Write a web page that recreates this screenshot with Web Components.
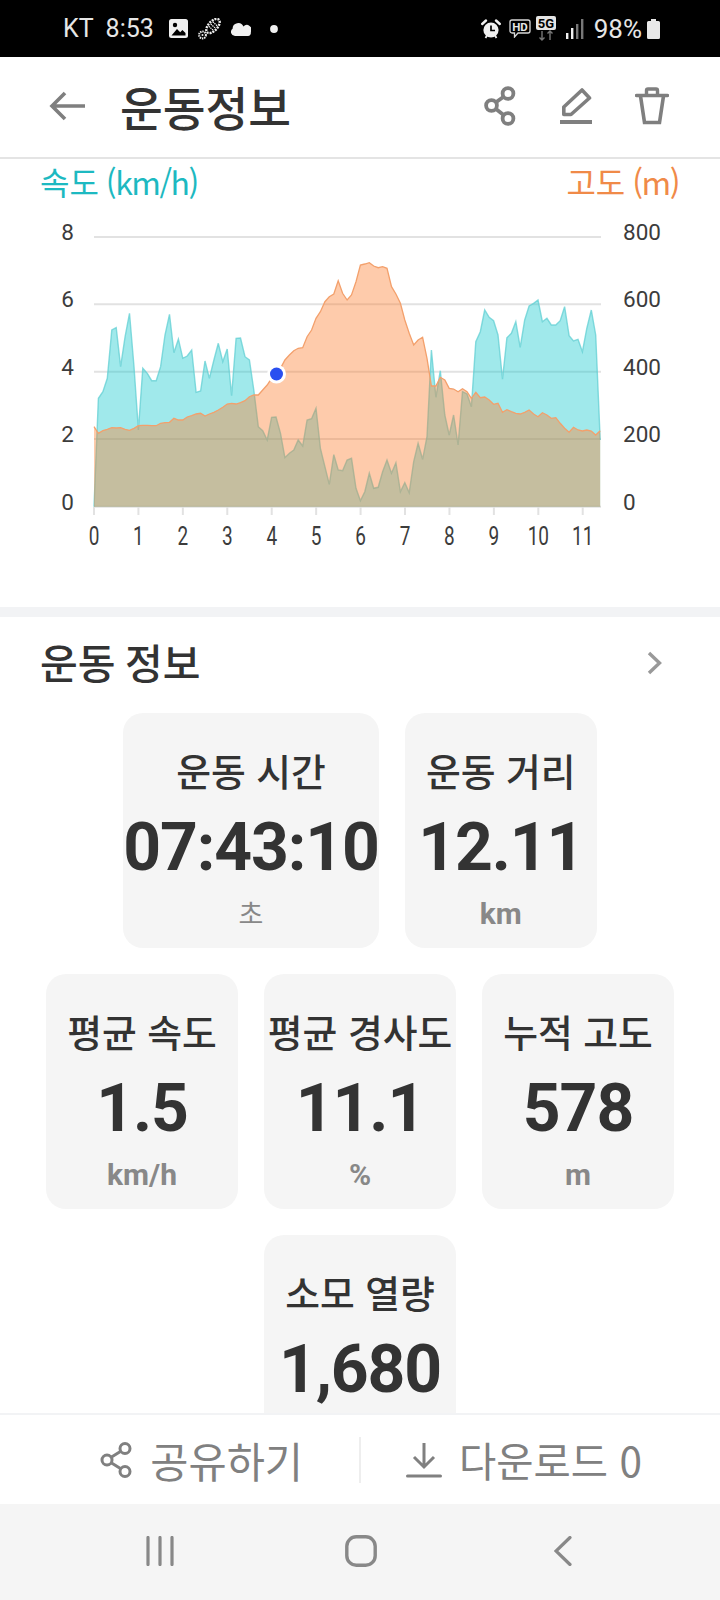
<!DOCTYPE html>
<html lang="ko">
<head>
<meta charset="utf-8">
<title>운동정보</title>
<style>
    html, body {
        margin: 0;
        padding: 0;
        background: #fff;
        font-family: "Noto Sans CJK KR", "Noto Sans", sans-serif;
    }
</style>
</head>
<body>
<workout-screen>
    <status-bar></status-bar>
    <app-header>운동정보</app-header>
    <speed-chart></speed-chart>
    <section-head>운동 정보</section-head>
    <stat-grid>
        <stat-card><span slot="label">운동 시간</span><span slot="value">07:43:10</span><span slot="unit" style="font-weight:400;font-size:27px">초</span></stat-card>
        <stat-card><span slot="label">운동 거리</span><span slot="value">12.11</span><span slot="unit">km</span></stat-card>
        <stat-card><span slot="label">평균 속도</span><span slot="value">1.5</span><span slot="unit">km/h</span></stat-card>
        <stat-card><span slot="label">평균 경사도</span><span slot="value">11.1</span><span slot="unit">%</span></stat-card>
        <stat-card><span slot="label">누적 고도</span><span slot="value">578</span><span slot="unit">m</span></stat-card>
        <stat-card><span slot="label">소모 열량</span><span slot="value">1,680</span></stat-card>
    </stat-grid>
    <action-bar slot="footer"></action-bar>
    <nav-bar slot="footer"></nav-bar>
</workout-screen>

<script>
class WorkoutScreen extends HTMLElement {
    constructor() {
        super();
        this.attachShadow({mode: 'open'});
        this.shadowRoot.innerHTML = `
            <style>
                :host {
                    display: flex;
                    flex-direction: column;
                    width: 720px;
                    height: 1600px;
                    overflow: hidden;
                    background: #fff;
                }
                .body {
                    flex: 1;
                    min-height: 0;
                    overflow: hidden;
                }
            </style>
            <div class="body"><slot></slot></div>
            <slot name="footer"></slot>
        `;
    }
}

class StatusBar extends HTMLElement {
    constructor() {
        super();
        this.attachShadow({mode: 'open'});
        this.shadowRoot.innerHTML = `
            <style>
                :host {
                    display: flex;
                    align-items: center;
                    justify-content: space-between;
                    height: 57px;
                    padding: 0 60px 0 63px;
                    box-sizing: border-box;
                    background: #000;
                    color: #e6e6e6;
                    font: 400 25px Roboto, sans-serif;
                }
                .side {
                    display: flex;
                    align-items: center;
                }
                svg {
                    display: block;
                    flex: none;
                }
                .time { margin-left: 12px; }
                .pct { font-size: 26px; }
            </style>
            <div class="side left">
                <span>KT</span>
                <span class="time">8:53</span>
                <svg style="margin-left:15px" width="19" height="19" viewBox="0 0 19 19">
                    <rect width="19" height="19" rx="2.5" fill="#f0f0f0"/>
                    <circle cx="6" cy="6" r="2.2" fill="#000"/>
                    <path d="M2.5 16.5 L8 10 L11.2 13.2 L13.4 11 L16.5 14 V16.5 Z" fill="#000"/>
                </svg>
                <svg style="margin-left:10px" width="23" height="22" viewBox="0 0 23 22">
                    <g transform="rotate(42 15 8)">
                        <ellipse cx="15" cy="8" rx="4.6" ry="8.6" fill="none" stroke="#eee" stroke-width="2.4" stroke-dasharray="2 1"/>
                        <path d="M12 5 H18 M12 8 H18 M12 11 H18" stroke="#eee" stroke-width="1.3" stroke-dasharray="1.4 .8"/>
                    </g>
                    <circle cx="4.5" cy="17" r="3.4" fill="none" stroke="#eee" stroke-width="2" stroke-dasharray="1.4 .8"/>
                    <circle cx="4.5" cy="17" r="1" fill="#eee"/>
                </svg>
                <svg style="margin-left:10px" width="20" height="14" viewBox="0 0 20 14">
                    <path d="M4 14 A4 4 0 0 1 1.6 6.8 A5.6 5.6 0 0 1 12.4 4.6 A4.6 4.6 0 0 1 19.8 10 A3.2 3.2 0 0 1 17 14 Z" fill="#f0f0f0"/>
                </svg>
                <svg style="margin-left:19px" width="8" height="8" viewBox="0 0 8 8"><circle cx="4" cy="4" r="3.9" fill="#f0f0f0"/></svg>
            </div>
            <div class="side right">
                <svg width="20" height="20" viewBox="0 0 20 20">
                    <circle cx="10" cy="11" r="7.6" fill="#f0f0f0"/>
                    <path d="M10 6.5 V11.5 H14" fill="none" stroke="#000" stroke-width="1.7"/>
                    <path d="M1.2 5 L5 1.5 M18.8 5 L15 1.5" stroke="#f0f0f0" stroke-width="2.4" stroke-linecap="round"/>
                    <path d="M4.5 19 L6 16.5 M15.5 19 L14 16.5" stroke="#f0f0f0" stroke-width="1.8"/>
                </svg>
                <svg style="margin-left:8px" width="22" height="19" viewBox="0 0 22 19">
                    <path d="M3 1 H19 A2 2 0 0 1 21 3 V12 A2 2 0 0 1 19 14 H9 L5.5 18 V14 H3 A2 2 0 0 1 1 12 V3 A2 2 0 0 1 3 1 Z" fill="none" stroke="#d8d8d8" stroke-width="1.3"/>
                    <text x="11" y="11.6" text-anchor="middle" font-family="Roboto, sans-serif" font-size="11.5" font-weight="700" fill="#e6e6e6">HD</text>
                </svg>
                <svg style="margin-left:5px" width="20" height="25" viewBox="0 0 20 25">
                    <rect width="20" height="14" rx="2" fill="#e4e4e4"/>
                    <text x="10" y="11.8" text-anchor="middle" font-family="Roboto, sans-serif" font-size="13" font-weight="700" fill="#000">5G</text>
                    <path d="M6 15 V24 M3.5 21.5 L6 24 L8.5 21.5" fill="none" stroke="#777" stroke-width="1.4"/>
                    <path d="M14 24 V15 M11.5 17.5 L14 15 L16.5 17.5" fill="none" stroke="#777" stroke-width="1.4"/>
                </svg>
                <svg style="margin:0 10px" width="18" height="20" viewBox="0 0 18 20">
                    <rect x="0" y="14" width="2.4" height="6" fill="#f0f0f0"/>
                    <rect x="5" y="9" width="2.4" height="11" fill="#f0f0f0"/>
                    <rect x="10" y="5" width="2.4" height="15" fill="#777"/>
                    <rect x="15" y="0" width="2.4" height="20" fill="#777"/>
                </svg>
                <span class="pct">98%</span>
                <svg style="margin-left:5px" width="13" height="20" viewBox="0 0 13 20">
                    <path d="M4 0 H9 V2 H11.5 A1.5 1.5 0 0 1 13 3.5 V18.5 A1.5 1.5 0 0 1 11.5 20 H1.5 A1.5 1.5 0 0 1 0 18.5 V3.5 A1.5 1.5 0 0 1 1.5 2 H4 Z" fill="#e8e8e8"/>
                </svg>
            </div>
        `;
    }
}

class AppHeader extends HTMLElement {
    constructor() {
        super();
        this.attachShadow({mode: 'open'});
        this.shadowRoot.innerHTML = `
            <style>
                :host {
                    display: flex;
                    align-items: center;
                    height: 102px;
                    padding: 0 51px 2px 49px;
                    box-sizing: border-box;
                    border-bottom: 2px solid #e4e4e4;
                    background: #fff;
                }
                .title {
                    margin-left: 34px;
                    flex: 1;
                    font-size: 46.5px;
                    font-weight: 500;
                    line-height: 60px;
                    color: #333;
                }
                .icons {
                    display: flex;
                    align-items: center;
                    gap: 44px;
                }
                .trash { margin-left: -1px; }
                svg { display: block; }
            </style>
            <svg width="37" height="30" viewBox="0 0 37 30">
                <path d="M36 15 H3 M16 2 L3 15 L16 28" fill="none" stroke="#7f7f7f" stroke-width="3.6"/>
            </svg>
            <div class="title"><slot></slot></div>
            <div class="icons">
                <svg width="32" height="40" viewBox="0 0 32 40">
                    <g fill="none" stroke="#7f7f7f" stroke-width="3.8">
                        <circle cx="24" cy="7.5" r="5.4"/>
                        <circle cx="7.5" cy="19.5" r="5.4"/>
                        <circle cx="24" cy="32.5" r="5.4"/>
                        <path d="M19.6 10.7 L12 16.3 M12 23 L19.6 29"/>
                    </g>
                </svg>
                <svg width="32" height="38" viewBox="0 0 32 38">
                    <path d="M3.8 27.5 V20 L22 3 L29.5 11 L11 27.5 Z" fill="none" stroke="#7f7f7f" stroke-width="3.6" stroke-linejoin="round"/>
                    <rect x="0" y="33" width="32" height="4" fill="#7f7f7f"/>
                </svg>
                <svg class="trash" width="34" height="38" viewBox="0 0 34 38">
                    <path d="M11.5 7 V3.5 Q11.5 2 13 2 H21 Q22.5 2 22.5 3.5 V7" fill="none" stroke="#7f7f7f" stroke-width="3.4"/>
                    <path d="M1.5 8.5 H32.5" stroke="#7f7f7f" stroke-width="3.4" stroke-linecap="round"/>
                    <path d="M5.5 9 L9.5 35.5 H24.5 L28.5 9" fill="none" stroke="#7f7f7f" stroke-width="3.6"/>
                </svg>
            </div>
        `;
    }
}

class SpeedChart extends HTMLElement {
    // y positions read off the reference, one sample every 0.1 km
    speed = [1040,715,695,655,510,503,620,530,460,620,810,625,640,662,662,620,525,463,578,537,595,588,570,697,693,603,655,600,550,605,567,707,535,534,590,600,690,800,812,840,772,771,820,893,880,870,840,858,780,776,745,865,920,973,884,930,932,900,895,985,1022,995,940,985,982,935,900,940,908,995,968,998,905,850,898,830,570,712,632,765,825,765,855,695,702,740,545,515,450,472,482,525,658,533,520,485,562,480,438,430,420,485,475,495,495,482,440,527,543,538,575,505,450,525,840];
    altitude = [800,820,812,808,803,804,803,808,811,805,797,796,796,797,797,790,788,787,775,780,780,771,767,762,760,768,762,757,750,742,732,730,732,728,722,710,705,705,690,675,655,645,625,600,585,572,565,563,530,510,475,455,425,410,402,362,400,420,405,365,315,312,308,318,323,320,325,380,402,430,480,520,555,540,532,595,678,678,652,660,685,687,695,686,695,715,697,713,711,720,733,730,757,749,755,760,762,757,750,762,770,758,765,775,773,790,805,817,802,810,813,810,813,825,812];

    constructor() {
        super();
        this.attachShadow({mode: 'open'});
    }

    connectedCallback() {
        this.render();
    }

    areaPath(values) {
        const line = values.map((v, i) => `${(94 + i * 4.44).toFixed(1)},${(160 + v / 3).toFixed(1)}`);
        return {
            line: line.join(' '),
            area: `94,506.7 ${line.join(' ')} 600.2,506.7`
        };
    }

    render() {
        const speed = this.areaPath(this.speed);
        const altitude = this.areaPath(this.altitude);
        const rows = [[237, '8', '800'], [304.3, '6', '600'], [371.7, '4', '400'], [439, '2', '200'], [506.7, '0', '0']];
        const grid = rows.map(([y, left, right]) => `
            <line x1="94" x2="601" y1="${y}" y2="${y}" stroke="#e2e2e2" stroke-width="2"/>
            <text x="74" y="${y + 3}" text-anchor="end" class="axis">${left}</text>
            <text x="623" y="${y + 3}" class="axis">${right}</text>
        `).join('');
        let ticks = '';
        for (let km = 0; km <= 11; km++) {
            const x = 94 + km * 44.43;
            ticks += `
                <line x1="${x}" x2="${x}" y1="507" y2="515" stroke="#e2e2e2" stroke-width="2"/>
                <text transform="translate(${x} 545) scale(.76 1)" text-anchor="middle" class="km">${km}</text>
            `;
        }
        this.shadowRoot.innerHTML = `
            <style>
                :host {
                    display: block;
                    height: 448px;
                    background: #fff;
                }
                .heads {
                    display: flex;
                    justify-content: space-between;
                    height: 44px;
                    padding: 0 41px 0 40px;
                    font-size: 32px;
                    line-height: 44px;
                    word-spacing: -2px;
                }
                .speed { color: #1db9c1; }
                .alt { color: #f08a48; }
                .heads b {
                    font-weight: 400;
                    letter-spacing: -1.5px;
                }
                svg { display: block; }
                text {
                    font-family: Roboto, sans-serif;
                    fill: #3c3c3c;
                }
                .axis { font-size: 22.5px; }
                .km { font-size: 25px; }
            </style>
            <div class="heads">
                <span class="speed">속도 <b>(km/h)</b></span>
                <span class="alt">고도 <b>(m)</b></span>
            </div>
            <svg width="720" height="404" viewBox="0 203 720 404">
                ${grid}
                ${ticks}
                <polygon points="${speed.area}" fill="rgb(18,200,204)" fill-opacity=".4"/>
                <polyline points="${speed.line}" fill="none" stroke="#62cfd3" stroke-width="1.4" stroke-opacity=".75"/>
                <polygon points="${altitude.area}" fill="rgb(252,125,45)" fill-opacity=".4"/>
                <polyline points="${altitude.line}" fill="none" stroke="#f3a06c" stroke-width="1.3"/>
                <circle cx="276.5" cy="374" r="9.5" fill="#fff"/>
                <circle cx="276.5" cy="374" r="6.5" fill="#2a4ff0"/>
            </svg>
        `;
    }
}

class SectionHead extends HTMLElement {
    constructor() {
        super();
        this.attachShadow({mode: 'open'});
        this.shadowRoot.innerHTML = `
            <style>
                :host {
                    display: flex;
                    align-items: center;
                    justify-content: space-between;
                    height: 92px;
                    margin-top: 10px;
                    padding: 0 58px 0 40px;
                    box-shadow: 0 -10px 0 #f2f3f5;
                    font-size: 41px;
                    font-weight: 500;
                    word-spacing: -2px;
                    color: #333;
                }
                span {
                    position: relative;
                    top: -2px;
                }
                svg { display: block; }
            </style>
            <span><slot></slot></span>
            <svg width="15" height="24" viewBox="0 0 15 24">
                <path d="M2 2 L12.5 12 L2 22" fill="none" stroke="#999" stroke-width="3.4"/>
            </svg>
        `;
    }
}

class StatGrid extends HTMLElement {
    constructor() {
        super();
        this.attachShadow({mode: 'open'});
        this.shadowRoot.innerHTML = `
            <style>
                :host {
                    display: flex;
                    flex-wrap: wrap;
                    justify-content: center;
                    gap: 26px;
                    padding: 4px 20px 0;
                }
            </style>
            <slot></slot>
        `;
    }
}

class StatCard extends HTMLElement {
    constructor() {
        super();
        this.attachShadow({mode: 'open'});
        this.shadowRoot.innerHTML = `
            <style>
                :host {
                    display: flex;
                    flex-direction: column;
                    align-items: center;
                    box-sizing: border-box;
                    min-width: 192px;
                    height: 235px;
                    padding-top: 34px;
                    border-radius: 20px;
                    background: #f5f5f5;
                    white-space: nowrap;
                }
                .label {
                    font-size: 37.8px;
                    font-weight: 500;
                    line-height: 46px;
                    color: #333;
                }
                .value {
                    margin-top: 20px;
                    font: 700 66px/70px Roboto, sans-serif;
                    letter-spacing: -1.1px;
                    color: #333;
                }
                .unit {
                    margin-top: 11px;
                    font: 700 30px/40px Roboto, "Noto Sans CJK KR", sans-serif;
                    color: #888;
                }
            </style>
            <div class="label"><slot name="label"></slot></div>
            <div class="value"><slot name="value"></slot></div>
            <div class="unit"><slot name="unit"></slot></div>
        `;
    }
}

class ActionBar extends HTMLElement {
    constructor() {
        super();
        this.attachShadow({mode: 'open'});
        this.shadowRoot.innerHTML = `
            <style>
                :host {
                    display: flex;
                    align-items: center;
                    height: 91px;
                    box-sizing: border-box;
                    border-top: 2px solid #f2f3f5;
                    background: #fff;
                    font-size: 40.5px;
                    color: #808080;
                }
                .btn {
                    display: flex;
                    align-items: center;
                    gap: 18px;
                    height: 46px;
                }
                .share {
                    width: 361px;
                    box-sizing: border-box;
                    justify-content: flex-end;
                    padding-right: 56px;
                    border-right: 2px solid #eee;
                    font-size: 41.5px;
                }
                .down {
                    padding-left: 45px;
                    gap: 17px;
                }
                svg { display: block; }
            </style>
            <div class="btn share">
                <svg width="32" height="36" viewBox="0 0 32 36">
                    <g fill="none" stroke="#808080" stroke-width="3">
                        <circle cx="25" cy="6.5" r="5"/>
                        <circle cx="7" cy="18" r="5"/>
                        <circle cx="25" cy="29.5" r="5"/>
                        <path d="M20.8 9.2 L11.2 15.3 M11.2 20.7 L20.8 26.8"/>
                    </g>
                </svg>
                <span>공유하기</span>
            </div>
            <div class="btn down">
                <svg width="36" height="36" viewBox="0 0 36 36">
                    <path d="M18 1 V25 M8 15 L18 25 L28 15" fill="none" stroke="#808080" stroke-width="3"/>
                    <path d="M1.5 34 H34.5" stroke="#808080" stroke-width="3" stroke-linecap="round"/>
                </svg>
                <span>다운로드 0</span>
            </div>
        `;
    }
}

class NavBar extends HTMLElement {
    constructor() {
        super();
        this.attachShadow({mode: 'open'});
        this.shadowRoot.innerHTML = `
            <style>
                :host {
                    display: flex;
                    align-items: center;
                    height: 96px;
                    padding-bottom: 2px;
                    box-sizing: border-box;
                    padding-left: 146px;
                    background: #f5f5f5;
                }
                svg { display: block; }
                .home { margin-left: 171px; }
                .back { margin-left: 177px; }
            </style>
            <svg width="28" height="30" viewBox="0 0 28 30">
                <path d="M2 1.5 V28.5 M14 1.5 V28.5 M26 1.5 V28.5" stroke="#888" stroke-width="3.2" stroke-linecap="round"/>
            </svg>
            <svg class="home" width="32" height="32" viewBox="0 0 32 32">
                <rect x="1.8" y="1.8" width="28.4" height="28.4" rx="9.5" fill="none" stroke="#888" stroke-width="3.4"/>
            </svg>
            <svg class="back" width="18" height="30" viewBox="0 0 18 30">
                <path d="M16 1.5 L2 15 L16 28.5" fill="none" stroke="#888" stroke-width="3.2" stroke-linecap="round"/>
            </svg>
        `;
    }
}

customElements.define('workout-screen', WorkoutScreen);
customElements.define('status-bar', StatusBar);
customElements.define('app-header', AppHeader);
customElements.define('speed-chart', SpeedChart);
customElements.define('section-head', SectionHead);
customElements.define('stat-grid', StatGrid);
customElements.define('stat-card', StatCard);
customElements.define('action-bar', ActionBar);
customElements.define('nav-bar', NavBar);
</script>
</body>
</html>
